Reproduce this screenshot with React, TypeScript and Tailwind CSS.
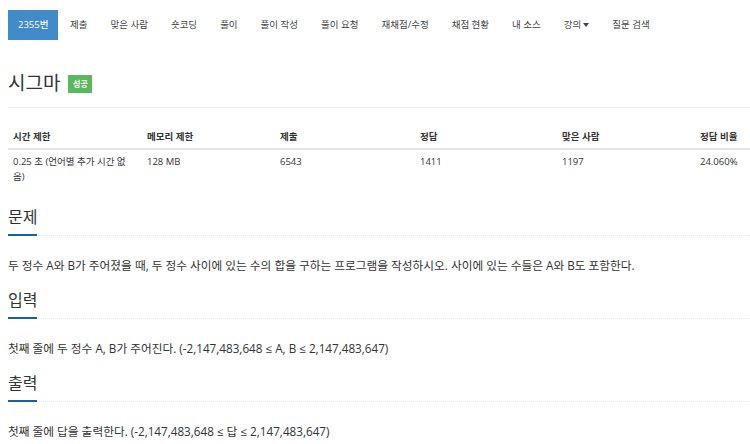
import React from "react";

const FONT = { fontFamily: '"Open Sans", "Noto Sans CJK KR", sans-serif' };

const navItems = [
  "제출",
  "맞은 사람",
  "숏코딩",
  "풀이",
  "풀이 작성",
  "풀이 요청",
  "재채점/수정",
  "채점 현황",
  "내 소스",
];

function Section({ title, first, children }: { title: string; first?: boolean; children: React.ReactNode }) {
  return (
    <div className={first ? "mt-[23px]" : "mt-[16px]"}>
      <div className="flex items-end">
        <h2 className="text-[16px] leading-[20px] text-[#333] pb-[7px] border-b-2 border-[#1560ab] font-normal">
          {title}
        </h2>
        <div className="flex-1 border-b border-dotted border-[#e6e6e6] mb-[0.5px]" />
      </div>
      <p className="mt-[20px] text-[11.7px] leading-[18px] text-[#333] whitespace-nowrap">{children}</p>
    </div>
  );
}

export default function App() {
  const cols = "grid grid-cols-[134px_133px_140px_142px_138px_1fr]";
  return (
    <div className="w-[750px] h-[444px] overflow-hidden bg-white" style={FONT}>
      <nav className="flex pl-[8px] pt-[10px] text-[9.5px] text-[#444]">
        <div className="h-[30px] px-[10px] flex items-center bg-[#428bca] text-white font-medium">
          2355번
        </div>
        {navItems.map((n) => (
          <div key={n} className="h-[30px] px-[11.5px] flex items-center whitespace-nowrap">
            {n}
          </div>
        ))}
        <div className="h-[30px] px-[11.5px] flex items-center whitespace-nowrap">
          강의
          <span className="ml-[2px] inline-block w-0 h-0 border-l-[3px] border-r-[3px] border-t-[4px] border-l-transparent border-r-transparent border-t-[#444]" />
        </div>
        <div className="h-[30px] px-[11.5px] flex items-center whitespace-nowrap">질문 검색</div>
      </nav>

      <div className="pl-[8px]">
        <div className="mt-[31px] pb-[12px] border-b border-[#eee] flex items-center">
          <h1 className="text-[19px] leading-[24px] text-[#333] font-normal">시그마</h1>
          <span className="ml-[8px] mt-[2px] h-[18px] w-[24px] bg-[#5cb85c] text-white text-[8px] font-bold flex items-center justify-center">
            성공
          </span>
        </div>

        <div className="mt-[18px] text-[9.5px] text-[#333]">
          <div className={`${cols} border-b-2 border-[#e3e3e3] font-bold leading-[12px]`}>
            {["시간 제한", "메모리 제한", "제출", "정답", "맞은 사람", "정답 비율"].map((h) => (
              <div key={h} className="pl-[5px] pt-[5px] pb-[5px] whitespace-nowrap">
                {h}
              </div>
            ))}
          </div>
          <div className={`${cols} leading-[15px]`}>
            <div className="pl-[5px] pt-[4px] whitespace-nowrap">
              0.25 초 (언어별 추가 시간 없
              <br />
              음)
            </div>
            <div className="pl-[5px] pt-[4px]">128 MB</div>
            <div className="pl-[5px] pt-[4px]">6543</div>
            <div className="pl-[5px] pt-[4px]">1411</div>
            <div className="pl-[5px] pt-[4px]">1197</div>
            <div className="pl-[5px] pt-[4px]">24.060%</div>
          </div>
        </div>

        <Section title="문제" first>
          두 정수 A와 B가 주어졌을 때, 두 정수 사이에 있는 수의 합을 구하는 프로그램을 작성하시오. 사이에 있는 수들은 A와 B도 포함한다.
        </Section>
        <Section title="입력">
          첫째 줄에 두 정수 A, B가 주어진다. (-2,147,483,648 ≤ A, B ≤ 2,147,483,647)
        </Section>
        <Section title="출력">
          첫째 줄에 답을 출력한다. (-2,147,483,648 ≤ 답 ≤ 2,147,483,647)
        </Section>
      </div>
    </div>
  );
}
